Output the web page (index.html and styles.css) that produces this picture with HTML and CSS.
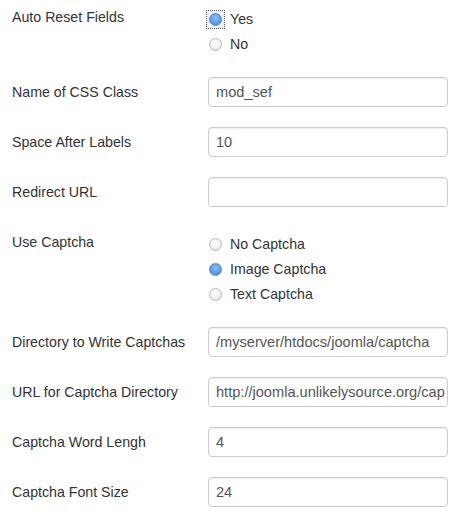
FILE: index.html
```html
<!DOCTYPE html>
<html>
<head>
<meta charset="utf-8">
<link rel="stylesheet" href="styles.css">
</head>
<body>
<form class="form">
  <div class="row">
    <div class="label">Auto Reset Fields</div>
    <div class="radios">
      <label class="radio"><span class="focusbox"><span class="dot checked"></span></span>Yes</label>
      <label class="radio"><span class="dot"></span>No</label>
    </div>
  </div>
  <div class="row">
    <div class="label">Name of CSS Class</div>
    <div class="input">mod_sef</div>
  </div>
  <div class="row">
    <div class="label">Space After Labels</div>
    <div class="input">10</div>
  </div>
  <div class="row">
    <div class="label">Redirect URL</div>
    <div class="input"></div>
  </div>
  <div class="row">
    <div class="label">Use Captcha</div>
    <div class="radios">
      <label class="radio"><span class="dot"></span>No Captcha</label>
      <label class="radio"><span class="dot checked"></span>Image Captcha</label>
      <label class="radio"><span class="dot"></span>Text Captcha</label>
    </div>
  </div>
  <div class="row">
    <div class="label">Directory to Write Captchas</div>
    <div class="input">/myserver/htdocs/joomla/captcha</div>
  </div>
  <div class="row">
    <div class="label">URL for Captcha Directory</div>
    <div class="input">http://joomla.unlikelysource.org/cap</div>
  </div>
  <div class="row">
    <div class="label">Captcha Word Lengh</div>
    <div class="input">4</div>
  </div>
  <div class="row">
    <div class="label">Captcha Font Size</div>
    <div class="input">24</div>
  </div>
</form>
</body>
</html>
```
FILE: styles.css
```css
html, body {
  margin: 0;
  padding: 0;
  background: #ffffff;
}
body {
  font-family: "Liberation Sans", Arial, sans-serif;
  font-size: 14.2px;
  color: #333333;
}
.form {
  padding: 2px 0 0 12px;
}
.row {
  display: flex;
  align-items: flex-start;
  margin-bottom: 20px;
}
.label {
  width: 196px;
  flex: none;
  padding-top: 5px;
  line-height: 20px;
}
.input {
  box-sizing: border-box;
  width: 240px;
  height: 30px;
  border: 1px solid #cccccc;
  border-radius: 4px;
  box-shadow: inset 0 1px 1px rgba(0,0,0,0.075);
  padding: 4px 7px;
  line-height: 20px;
  font-size: 14.6px;
  color: #555555;
  white-space: nowrap;
  overflow: hidden;
  background: #fff;
}
.radios {
  display: flex;
  flex-direction: column;
  padding-top: 5px;
}
.radio {
  display: flex;
  align-items: center;
  height: 25px;
  line-height: 25px;
  padding-left: 1px;
}
.focusbox {
  display: flex;
  align-items: center;
  justify-content: center;
  width: 13px;
  height: 13px;
  margin-right: 8px;
  outline: 1px dotted #555;
  outline-offset: 2px;
  box-shadow: 0 0 0 2px #e8eef6;
  flex: none;
}
.focusbox .dot {
  margin-right: 0;
}
.dot {
  position: relative;
  box-sizing: border-box;
  width: 13px;
  height: 13px;
  border-radius: 50%;
  border: 1px solid #b8b8b8;
  background: radial-gradient(circle at 50% 35%, #ffffff 0%, #f4f4f4 50%, #dcdcdc 100%);
  margin-right: 8px;
  flex: none;
}
.dot.checked {
  border-color: #5a86c4;
  background: radial-gradient(circle at 50% 40%, #b7d5f7 0%, #6ea5ea 45%, #3f7fd6 100%);
}
.dot.checked::after {
  content: "";
  position: absolute;
  left: 2px;
  top: 2px;
  width: 7px;
  height: 7px;
  border-radius: 50%;
  background: radial-gradient(circle at 50% 35%, #8fc0f7 0%, #4d8fe3 100%);
}
```
